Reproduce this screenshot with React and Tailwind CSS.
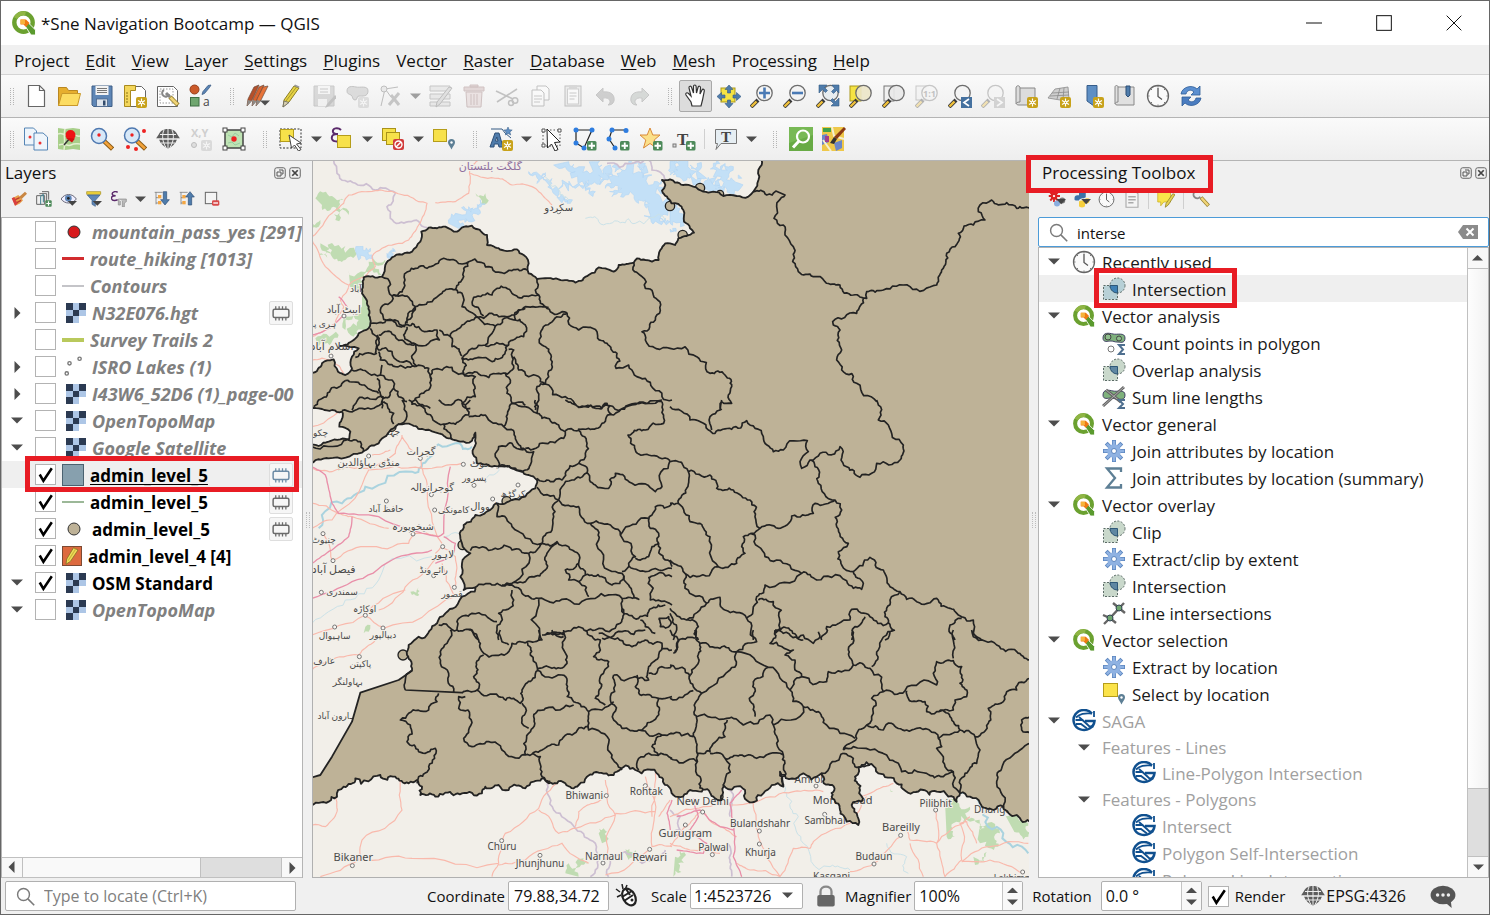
import React from "react";

/* ---------- small shared pieces ---------- */

const Svg = ({ children, s = 24, className = "", ...rest }) => (
  <svg viewBox="0 0 24 24" width={s} height={s} fill="none" className={"shrink-0 " + className} aria-hidden="true" {...rest}>
    {children}
  </svg>
);

const Down = ({ w = 12 }) => (
  <svg viewBox="0 0 12 7" width={w} height={w * 7 / 12} aria-hidden="true">
    <path d="M0 .5h12L6 6.5z" fill="#4d4d4d" />
  </svg>
);

const Right = () => (
  <svg viewBox="0 0 7 12" width="7" height="12" aria-hidden="true">
    <path d="M.5 0v12L6.5 6z" fill="#4d4d4d" />
  </svg>
);

const Star = ({ x = 13, y = 13, off }) => (
  <g transform={`translate(${x} ${y})`} opacity={off ? 0.45 : 1}>
    <rect width="11" height="11" rx="2" fill={off ? "#8b8b8b" : "#c8a21a"} />
    <path d="M5.500 1.500v8M2 3.500l7 4M9 3.500l-7 4" stroke="#fff" strokeWidth="1.200" />
    <circle cx="5.500" cy="5.500" r="1.600" fill="#fff" />
    <circle cx="5.500" cy="5.500" r=".7" fill={off ? "#8b8b8b" : "#c8a21a"} />
  </g>
);

const Plus = ({ x = 14, y = 14 }) => (
  <g transform={`translate(${x} ${y})`}>
    <rect width="9.500" height="9.500" rx="1.500" fill="#4d8a5a" />
    <path d="M4.750 1.500v6.500M1.500 4.750h6.500" stroke="#fff" strokeWidth="1.800" />
  </g>
);

const Lens = ({ fill = "#f4f4f4", children }) => (
  <>
    <path d="M1 23l7-7" stroke="#3a3a3a" strokeWidth="4" />
    <path d="M1.500 22.500l5-5" stroke="#f0c13a" strokeWidth="2.400" />
    <circle cx="14.500" cy="9" r="7.700" fill={fill} fillOpacity=".9" stroke="#6d6d6d" strokeWidth="1.300" />
    {children}
  </>
);

const QLogo = ({ s = 24 }) => (
  <Svg s={s}>
    <circle cx="11.500" cy="11.500" r="9.200" stroke="#6ba130" strokeWidth="4.400" />
    <path d="M3.500 7a9.200 9.200 0 0 1 10-4.500" stroke="#8fb544" strokeWidth="4" />
    <path d="M12.500 14l3-3 8 8v5h-4.500z" fill="#5a9a2e" stroke="#fff" strokeWidth=".9" />
    <path d="M8.500 8.500h5.500l3.500 3.500-3.500 4-2.500-2.500h-3z" fill="#ee7913" />
    <path d="M8.500 8.500h4.500v4.500h-4.500z" fill="#f6b33c" />
  </Svg>
);

const Chip = ({ color = "#6b6b6b" }) => (
  <Svg s={18}>
    <rect x="1.500" y="7" width="21" height="11" rx="2" stroke={color} strokeWidth="2" />
    <path d="M5 7V3M9.500 7V3M14 7V3M18.500 7V3M5 22v-4M9.500 22v-4M14 22v-4M18.500 22v-4" stroke={color} strokeWidth="1.700" />
  </Svg>
);

const Globe = ({ s = 24, c = "#5d5d5d" }) => (
  <Svg s={s}>
    <path d="M12 2c5 0 8 2.500 9 5L24 11.500H0L3 7c1-2.500 4-5 9-5z" fill={c} />
    <path d="M3 12.500h18c-1.500 4-5 7.500-9 9-4-1.500-7.500-5-9-9z" fill={c} />
    <path d="M12 2v19M8 3C5.500 8 6.500 15 10 20.500M16 3c2.500 5 1.500 12-2 17.500M4 7.500h16M0 12h24M5 16h14" stroke="#eee" strokeWidth="1" />
  </Svg>
);

const Clock = ({ s = 24 }) => (
  <Svg s={s}>
    <circle cx="12" cy="12" r="10.500" fill="#fafafa" stroke="#666" strokeWidth="1.300" />
    <path d="M12 4v8.500l4 3" stroke="#555" strokeWidth="1.300" />
    <path d="M12 2v1.500M12 20.500V22M2 12h1.500M20.500 12H22M5 5l1 1M19 5l-1 1M5 19l1-1M19 19l-1-1" stroke="#777" />
  </Svg>
);

const Pin = ({ x = 16, y = 13 }) => (
  <g transform={`translate(${x} ${y})`}>
    <path d="M3.500 10.500C2 7 0 5.500 0 3.500a3.500 3.500 0 0 1 7 0c0 2-2 3.500-3.500 7z" fill="#5d7f95" />
    <circle cx="3.500" cy="3.500" r="1.200" fill="#fff" />
  </g>
);

const Gear = ({ s = 24, c = "#8fb2e2", d = "#5c86bf" }) => (
  <Svg s={s}>
    <path d="M12 1v22M1 12h22M4.200 4.200l15.600 15.600M19.800 4.200L4.200 19.800" stroke={d} strokeWidth="4" />
    <path d="M12 1.800v20.400M1.800 12h20.400M4.800 4.800l14.400 14.400M19.200 4.800L4.800 19.200" stroke={c} strokeWidth="2.600" />
    <circle cx="12" cy="12" r="6.800" fill={c} />
    <circle cx="12" cy="12" r="2.500" fill="#fff" stroke={d} />
  </Svg>
);

const Overlap = ({ hot }) => (
  <Svg>
    <rect x="1.500" y="8.500" width="14" height="14" fill={hot ? "#b7d0d6" : "#c9d8cb"} stroke="#5b6b66" strokeDasharray="2 1.500" />
    <circle cx="15.500" cy="8.500" r="7.500" fill={hot ? "#b7d0d6" : "#c9d8cb"} stroke="#5b6b66" strokeDasharray="2 1.500" />
    <path d="M8 8.500h7.500V16A7.500 7.500 0 0 1 8 8.500z" fill={hot ? "#3f81b5" : "#5f87a2"} stroke="#2f5878" />
  </Svg>
);

const Saga = () => (
  <Svg>
    <path d="M20 4.500A10.500 10 0 1 0 22.500 12h-9.500" stroke="#10508f" strokeWidth="2.500" />
    <path d="M4 8.500c5-5 10-4 16-4M22 2v6M3.500 11h7l7 6.500h4M7 8l9 8M4 15h5l6 4.500" stroke="#10508f" strokeWidth="1.800" />
  </Svg>
);

const Broom = () => (
  <Svg s={16}>
    <path d="M2 11l9-5 7 8c-3 4-7 7-12 8z" fill="#e8a04c" />
    <path d="M4 14l9-4M6 19l9-5" stroke="#c03b2b" strokeWidth="2" />
    <path d="M12 9l9-8 3 3-8 8z" fill="#c98743" />
    <path d="M1 11l4-2 5 10-4 3z" fill="#d94040" />
  </Svg>
);

/* ---------- toolbar drawings ---------- */

const I = {
  newFile: <Svg><path d="M4.500 1.500h11l5 5v16h-16z" fill="#fff" stroke="#666" strokeWidth="1.200" /><path d="M15.500 1.500v5h5" stroke="#666" strokeWidth="1.200" /></Svg>,
  open: <Svg><path d="M1.500 3.500h8l2 3h9v15h-19z" fill="#e6ae2e" stroke="#b98722" /><path d="M5 9.500h18.500l-3 12h-19z" fill="#fcdc62" stroke="#c9982a" /></Svg>,
  save: <Svg><path d="M2 2h20v20.500H3.500L2 21z" fill="#5e86b6" stroke="#3f5f86" /><rect x="5.500" y="2" width="13" height="9" fill="#f3f3f3" /><path d="M7 4.500h10M7 6.500h10M7 8.500h10" stroke="#777" /><rect x="6.500" y="15" width="11" height="7.500" fill="#dfe6ee" stroke="#48648a" strokeWidth=".8" /><rect x="13" y="16.500" width="2.500" height="5" fill="#334c6d" /></Svg>,
  layout: <Svg><path d="M6.500 2.500h12l4 4v16h-16z" fill="#fff" stroke="#666" /><path d="M1.500 1.500h11v5h-5v16h-6z" fill="#f3d65b" stroke="#a98a1e" /><path d="M3 9h2M3 12h2M3 15h2M3 18h2" stroke="#8d7415" /><Star /></Svg>,
  layoutMgr: <Svg><path d="M1.500 2.500h16l4 4v16h-20z" fill="#fff" stroke="#666" /><rect x="4" y="5" width="13" height="14" stroke="#999" strokeDasharray="1.500 1.500" /><path d="M10 9l4 4" stroke="#888" strokeWidth="3" /><path d="M8 6a3.500 3.500 0 1 0 5 4" stroke="#888" strokeWidth="2" /><path d="M14 13l8 8" stroke="#8f7b2a" strokeWidth="4.500" /><path d="M14.500 13.500l7 7" stroke="#f0d477" strokeWidth="2.800" /></Svg>,
  style: <Svg><circle cx="5.500" cy="5.500" r="4.500" fill="#cc5a2a" stroke="#96401c" /><path d="M22 1l-3 .5-5 6-1 3 2.500-1 5-6z" fill="#5a84b5" stroke="#3f5f86" strokeWidth=".8" /><rect x="1.500" y="13.500" width="8.500" height="8.500" fill="#6fa66f" stroke="#3f6f44" /><text x="14" y="22" fontSize="12" fill="#444" fontFamily="Open Sans, sans-serif">a</text></Svg>,
  editsMulti: <Svg><path d="M8 3l5-2-7 15-5 6 1-7z" fill="#b5502a" stroke="#6b4a3a" strokeWidth=".7" /><path d="M13 3l5-2-7 15-5 6 1-7z" fill="#d8622e" stroke="#6b4a3a" strokeWidth=".7" /><path d="M17 3l5-1-7 14-5 6 1-7z" fill="#e8743a" stroke="#6b4a3a" strokeWidth=".7" /><path d="M1 22l1-6 4 1zM6 22l1-6 4 1zM10 22l1-6 4 1z" fill="#8d8a86" /><path d="M14 16.500h10l-5 5z" fill="#4d4d4d" /></Svg>,
  pencil: <Svg><path d="M15 2l5 2-10 14-6 5 1-7z" fill="#e6d245" stroke="#8b7d24" /><path d="M17.500 3L7 17" stroke="#a99a2a" /><path d="M4 23l1-6 5 1.500z" fill="#d9d1b0" stroke="#666" strokeWidth=".8" /><path d="M15 2l1-1.500 4.500 2L20 4z" fill="#999" /></Svg>,
  saveOff: <Svg opacity=".3"><path d="M2 2h20v20H2z" fill="#9a9a9a" stroke="#666" /><rect x="6" y="2" width="12" height="8" fill="#f3f3f3" /><path d="M8 5h8M8 8h8" stroke="#666" /><rect x="6" y="15" width="9" height="7" fill="#eee" /><path d="M23 11l-8 9-2 4 4-2 8-9z" fill="#555" /></Svg>,
  polyOff: <Svg opacity=".45"><path d="M2 7c0-5 5-5 9-4s12-2 12 4-6 5-9 5-1 4-4 4-2-4-4-5-4-1-4-4z" fill="#bdbdbd" stroke="#888" /><Star x={13} y={13} off /></Svg>,
  vertexOff: <Svg opacity=".5"><path d="M3 22L7 5 20 3M8 6l5 7" stroke="#888" /><circle cx="6" cy="5" r="3" fill="#ddd" stroke="#888" /><path d="M11 21l10-12M13 11l8 10" stroke="#999" strokeWidth="3" /></Svg>,
  attrOff: <Svg opacity=".5"><path d="M1 2h20v5H1zM1 10h20v5H1zM1 18h20v4H1z" fill="#ddd" stroke="#999" /><path d="M20 3l3 1-12 16-4 3 1-5z" fill="#ccc" stroke="#888" /></Svg>,
  trashOff: <Svg opacity=".4"><path d="M2 3h20v4H2zM8 1h8v2H8z" fill="#c5abab" stroke="#977" /><path d="M4 8h16l-1 15H5z" fill="#ddc8c8" stroke="#977" /><path d="M9 10v11M12 10v11M15 10v11" stroke="#977" /></Svg>,
  cutOff: <Svg opacity=".4"><path d="M1 7l17 8M2 18L22 5" stroke="#777" strokeWidth="1.600" /><circle cx="20" cy="16.500" r="2.800" stroke="#777" strokeWidth="1.500" /><circle cx="16" cy="19" r="2.500" stroke="#777" strokeWidth="1.500" /></Svg>,
  copyOff: <Svg opacity=".4"><path d="M9 2h9l3 3v11H9z" fill="#fff" stroke="#777" /><path d="M4 6h9l3 3v13H4z" fill="#fff" stroke="#777" /><path d="M6 12h8M6 15h8M6 18h6" stroke="#888" /></Svg>,
  pasteOff: <Svg opacity=".4"><rect x="4" y="2" width="16" height="20" fill="#ddd" stroke="#777" /><rect x="6.500" y="5" width="11" height="15" fill="#fff" stroke="#999" /><path d="M8 1h8v4H8z" fill="#aaa" /><path d="M8.500 9h7M8.500 12h7M8.500 15h5" stroke="#888" /></Svg>,
  undoOff: <Svg opacity=".35"><path d="M9 4v4c8-1 12 3 11 9-1 3-3 4-6 4 4-3 2-8-5-7v4L2 11z" fill="#8a8a8a" stroke="#777" /></Svg>,
  redoOff: <Svg opacity=".35"><path d="M15 4v4C7 7 3 11 4 17c1 3 3 4 6 4-4-3-2-8 5-7v4l7-7z" fill="#9fa8a2" stroke="#777" /></Svg>,
  pan: <Svg><path d="M8 22l-1-4-5-7c-1-2 1-3 2.500-1.500L7 12 5 4c-.3-2 2-2.500 2.600-.5L9.500 9V2.500c0-2 2.500-2 2.600 0L12.500 9l1.500-5.500c.5-2 2.700-1.500 2.500.5L16 10l2-4c.8-1.500 2.700-.6 2.300 1L18.500 16 17 22z" fill="#fff" stroke="#333" strokeWidth="1.200" /></Svg>,
  panSel: <Svg><rect x="4" y="4" width="14" height="14" fill="#f5e343" stroke="#a9971c" /><path d="M12 1l4 4.500h-2.500V9h-3V5.500H8zM12 24l4-4.500h-2.500V16h-3v3.500H8zM0 12.500l4.500-4V11H8v3H4.500v2.500zM24 12.500l-4.500-4V11H16v3h3.500v2.500z" fill="#4f7cab" stroke="#345a84" strokeWidth=".6" /></Svg>,
  zin: <Svg><Lens><path d="M14.500 3.500v11M9 9h11" stroke="#4a7ab5" strokeWidth="2.600" /></Lens></Svg>,
  zout: <Svg><Lens><path d="M9 9h11" stroke="#4a7ab5" strokeWidth="2.600" /></Lens></Svg>,
  zfull: <Svg><Lens fill="#e7ecef" /><path d="M3 1h8L8.500 3.500l3 3-2 2-3-3L3 9zM23 1v8l-2.500-2.500-3 3-2-2 3-3L16 1zM23 22h-8l2.500-2.500-3-3 2-2 3 3L23 14z" fill="#4f7cab" stroke="#345a84" strokeWidth=".6" /></Svg>,
  zsel: <Svg><rect x="1" y="2" width="11" height="15" fill="#f5e343" stroke="#a9971c" /><Lens fill="#ece6c8" /></Svg>,
  zlayer: <Svg><rect x="2" y="2" width="10" height="15" fill="#f0f0f0" stroke="#777" /><Lens fill="#e9e9e9" /></Svg>,
  znative: <Svg opacity=".35"><rect x="1" y="2" width="10" height="14" fill="#f0f0f0" stroke="#777" /><Lens /><text x="8" y="13" fontSize="9" fontWeight="700" fill="#666" fontFamily="Open Sans, sans-serif">1:1</text></Svg>,
  zlast: <Svg><Lens /><rect x="13" y="13" width="11" height="11" fill="#45719f" /><path d="M21 15l-5 3.500 5 3.500" stroke="#fff" strokeWidth="1.700" /></Svg>,
  znext: <Svg opacity=".35"><Lens /><rect x="13" y="13" width="11" height="11" fill="#999" /><path d="M16 15l5 3.500-5 3.500" stroke="#fff" strokeWidth="1.700" /></Svg>,
  newMap: <Svg><path d="M2 4c0-3 4-3 4 0h15v17H5c-3 0-3-2-3-3z" fill="#dcdcdc" stroke="#888" /><path d="M6 4v14c-3 0-4 1-4 2" stroke="#888" /><Star x={13} y={13} /></Svg>,
  new3d: <Svg><path d="M8 5l13-2 1 12-9 1-12-2z" fill="#cfcfcf" stroke="#8a8a8a" strokeWidth=".8" /><path d="M5 9l17-1M3 12l19-1M13 4l-3 11M17 4l-1 11" stroke="#8a8a8a" strokeWidth=".8" /><Star x={13} y={13} /></Svg>,
  bookmark: <Svg><path d="M7 1.500h10V17l-3 5-7-5z" fill="#5e8fc4" stroke="#365d8a" /><Star x={13} y={13} /></Svg>,
  bookmarks: <Svg><path d="M2 3c0-2 3-2 3 0h16v18H4c-2 0-2-2-2-3z" fill="#e0e0e0" stroke="#888" /><path d="M5 3v15c-2 0-3 1-3 2" stroke="#888" /><path d="M13 2h4v9l-2 2-2-2z" fill="#4f7cab" stroke="#2d4f77" /></Svg>,
  clock: <Clock />,
  refresh: <Svg><path d="M2 10C3 3 13 0 18 5l3-3v9h-9l3-3C12 5 8 6 7 10z" fill="#5b8fd0" stroke="#2f5d97" strokeWidth=".8" /><path d="M22 14c-1 7-11 10-16 5l-3 3v-9h9l-3 3c3 3 7 2 8-2z" fill="#4a7cc0" stroke="#2f5d97" strokeWidth=".8" /></Svg>,
  idLayers: <Svg><path d="M.5 1h9l3 3v14H.5z" fill="#eef5fb" stroke="#5585b5" /><path d="M10 6h9l4.500 4v13H10z" fill="#eef5fb" stroke="#5585b5" /><circle cx="6" cy="10" r="1.500" fill="#e33" /><circle cx="16" cy="16" r="1.500" fill="#e33" /></Svg>,
  mapPin: <Svg><path d="M1 1l7 1 8-1 7 1v21l-7-1-8 1-7-1z" fill="#a8cf8a" /><path d="M1 7c5-2 7 3 12 1s6 2 10 1M2 18c5-3 8 2 12 0s6-1 9-1M8 2c-2 7 1 13-1 21" stroke="#e3efcf" strokeWidth="1.500" /><path d="M7 18l6-7" stroke="#333" strokeWidth="1.500" /><circle cx="13.500" cy="8" r="5" fill="#ee1414" /><path d="M9 11l6 4.500 3-4z" fill="#d01010" /></Svg>,
  magDot: <Svg><path d="M14 14l8.500 8" stroke="#8a5a14" strokeWidth="4.500" /><path d="M14.500 14.500l7.500 7" stroke="#f2a23a" strokeWidth="2.600" /><circle cx="9" cy="9" r="7.500" fill="#d7e8f8" stroke="#4e78b0" strokeWidth="1.500" /><circle cx="9" cy="8" r="1.700" fill="#e22" /></Svg>,
  magDots: <Svg><path d="M14 14l8.500 8" stroke="#8a5a14" strokeWidth="4.500" /><path d="M14.500 14.500l7.500 7" stroke="#f2a23a" strokeWidth="2.600" /><circle cx="9" cy="8.500" r="7.500" fill="#d7e8f8" stroke="#4e78b0" strokeWidth="1.500" /><g fill="#e22"><circle cx="9" cy="8" r="1.700" /><circle cx="21" cy="4" r="2" /><circle cx="5" cy="20" r="2" /><circle cx="13" cy="22" r="2" /></g></Svg>,
  globe: <Globe />,
  xy: <Svg opacity=".5"><text x="2" y="10" fontSize="11" fontWeight="700" fill="#aaa" fontFamily="Open Sans, sans-serif">X,Y</text><circle cx="5" cy="18" r="2.500" fill="#ccc" stroke="#888" /><Star x={12} y={13} off /></Svg>,
  extent: <Svg><rect x="3" y="3" width="18" height="18" fill="#bfe3b4" stroke="#444" strokeWidth="1.500" /><path d="M6 8l4 2 3-4 4 3M6 16l4-1 3 3 5-2" stroke="#9accA0" /><g fill="#fff" stroke="#444"><rect x="1" y="1" width="4" height="4" /><rect x="19" y="1" width="4" height="4" /><rect x="1" y="19" width="4" height="4" /><rect x="19" y="19" width="4" height="4" /></g><circle cx="12" cy="12" r="2.700" fill="#e22" /></Svg>,
  select: <Svg><rect x="1" y="2" width="21" height="19" stroke="#333" strokeDasharray="2 1.500" /><rect x="1.500" y="2.500" width="13" height="12" fill="#f7e14a" stroke="#b59d1a" /><path d="M10 8l12 8-4.500 1 4.500 5.500-2.500 1.500-4-6-3 3z" fill="#fff" stroke="#444" /></Svg>,
  selExpr: <Svg><path d="M11 3C8 0 2 1 3 5c.5 2 3 2 5 2-4 0-7 1-6 5 1 3 6 3 9 1" stroke="#5b2a6b" strokeWidth="2" /><rect x="7.500" y="8.500" width="13" height="12" fill="#f7e14a" stroke="#b59d1a" /></Svg>,
  deselect: <Svg><rect x="1.500" y="1.500" width="13" height="12" fill="#f7e14a" stroke="#a9921a" /><rect x="5.500" y="5.500" width="13" height="12" fill="#f7e14a" stroke="#a9921a" /><rect x="12" y="12" width="11" height="11" rx="2" fill="#d13b3b" /><circle cx="17.500" cy="17.500" r="3.500" stroke="#fff" strokeWidth="1.400" /><path d="M15 20l5-5" stroke="#fff" strokeWidth="1.400" /></Svg>,
  selLoc: <Svg><rect x="1.500" y="2.500" width="13" height="12" fill="#f7e14a" stroke="#b59d1a" /><Pin x={16} y={12} /></Svg>,
  label: <Svg><path d="M2 2h11l3 4 6 5" stroke="#345a84" /><path d="M5 20H1L6 6h4l4 14h-4l-.8-3h-4zM6.500 14h2.500L7.800 10z" fill="#4f7cab" stroke="#2d4f77" fillRule="evenodd" /><path d="M19 0l1.200 2.800 3 .2-2.300 2 .8 3-2.700-1.600L16.300 8l.8-3-2.300-2 3-.2z" fill="#5e8fc4" stroke="#345a84" strokeWidth=".5" /><Star x={13} y={13} /></Svg>,
  arrowSel: <Svg><rect x="3" y="3" width="17" height="16" stroke="#555" strokeDasharray="1.500 2" /><path d="M2 2h3v3H2zM18 2h3v3h-3zM2 17h3v3H2z" fill="#fff" stroke="#555" /><path d="M7 2l13 13-5.500.5 3.500 7-3 1.500-3.500-7-4 4z" fill="#fff" stroke="#222" /></Svg>,
  polyAdd: <Svg><path d="M3 3h16l-8 18-8-5z" stroke="#222" strokeWidth="1.200" /><g fill="#2e7de0"><circle cx="3" cy="3" r="2.500" /><circle cx="19" cy="3" r="2.500" /><circle cx="3" cy="16" r="2.500" /><circle cx="11" cy="21" r="2.500" /></g><Plus /></Svg>,
  lineAdd: <Svg><path d="M20 3H6L3 12l6 9" stroke="#222" strokeWidth="1.200" /><g fill="#2e7de0"><circle cx="20" cy="3.500" r="2.500" /><circle cx="6" cy="3" r="2.500" /><circle cx="3" cy="12" r="2.500" /><circle cx="9" cy="21" r="2.500" /></g><Plus /></Svg>,
  starAdd: <Svg><path d="M11 1l2.800 7H21l-5.800 5 2.300 8L11 16.500 4.500 21l2.300-8L1 8h7.200z" fill="#fbe08a" stroke="#d98a3a" /><Plus /></Svg>,
  textAdd: <Svg><text x="5" y="18" fontSize="17" fontWeight="700" fill="#444" fontFamily="Liberation Serif, serif">T</text><rect x="1" y="17" width="3" height="3" fill="#ddd" stroke="#777" /><Plus /></Svg>,
  textNote: <Svg><path d="M1.500 2.500h21v14H7l-5 6 1.500-6h-2z" fill="#e6eef3" stroke="#777" /><text x="7" y="14.500" fontSize="15" fontWeight="700" fill="#444" fontFamily="Liberation Serif, serif">T</text></Svg>,
  greenMag: <Svg><rect width="24" height="24" fill="#78b955" /><path d="M0 16l24-8v16H0z" fill="#68ab45" /><circle cx="14" cy="9.500" r="6" stroke="#fff" strokeWidth="2.200" /><path d="M10 14l-6 6.500" stroke="#fff" strokeWidth="3" /></Svg>,
  mapEdit: <Svg><rect width="22" height="24" fill="#efc84a" /><path d="M1 1h8v4H1z" fill="#3fa14a" /><path d="M0 8l5-1 2 8-7 3zM12 16l8-3v8l-6 3z" fill="#6b86c8" /><path d="M1 13l8 11M10 0l2 9 10 3" stroke="#f5f0d0" strokeWidth="2" /><path d="M3 9h4v6H3z" fill="#a33f8a" /><path d="M22 0l2 2-9 10-3-2z" fill="#8b3a14" /><path d="M12 10l3 2-3 5-4-1z" fill="#333" /></Svg>,
};

const mini = {
  addGroup: <Svg s={16}><path d="M1 7h12v13H1zM5 4h11v13M9 1h10v12" stroke="#666" strokeWidth="1.500" fill="none" /><path d="M7 20V8l4-3v12" stroke="#3f7f8f" strokeWidth="1.500" /><Plus x={14} y={14} /></Svg>,
  eye: <Svg s={16}><path d="M0 12C6 3 17 3 23 12 17 20 6 20 0 12z" fill="#eef" stroke="#667" strokeWidth="1.500" /><circle cx="11" cy="11" r="5" fill="#5e86b6" /><circle cx="11" cy="11" r="2" fill="#222" /><path d="M10 15h14l-7 7z" fill="#444" /></Svg>,
  filter: <Svg s={16}><path d="M1 1h21v4H1z" fill="#f1d63c" stroke="#a18d1b" /><path d="M2 6h19l-7 8v9l-5-3v-6z" fill="#5e86b6" stroke="#365d8a" /><path d="M10 15h14l-7 7z" fill="#444" /></Svg>,
  expr: <Svg s={16}><path d="M10 2C7 0 1 1 2 5c.5 2 3 2 5 2-4 0-7 1-6 5 1 3 6 3 9 1" stroke="#5b2a6b" strokeWidth="2.200" /><path d="M11 12h12v4l-3 2v6h-3v-9M11 12v9h3v-6" fill="#bbb" stroke="#888" /></Svg>,
  expand: <Svg s={16}><path d="M1 2h12M3 2v18M3 10h4M3 18h4" stroke="#666" /><rect x="6" y="6" width="5" height="5" fill="#f5a742" /><rect x="6" y="15" width="5" height="5" fill="#f5a742" /><path d="M14 1h5v12h4l-6.500 8L10 13h4z" fill="#4f7cab" stroke="#2d4f77" /></Svg>,
  collapse: <Svg s={16}><path d="M1 2h12M3 2v18M3 10h4M3 18h4" stroke="#666" /><rect x="5" y="6" width="5" height="5" fill="#f5a742" /><rect x="5" y="15" width="5" height="5" fill="#f5a742" /><path d="M14 21h5V9h4l-6.500-8L10 9h4z" fill="#4f7cab" stroke="#2d4f77" /></Svg>,
  remove: <Svg s={16}><rect x="2" y="2" width="17" height="17" fill="#f4f4f4" stroke="#666" strokeWidth="1.500" /><rect x="12" y="14" width="11" height="8" rx="2" fill="#d84a4a" /><path d="M14 18h7" stroke="#fff" strokeWidth="2" /></Svg>,
};

const toolbar1 = [
  [["New project", "newFile"], ["Open project", "open"], ["Save project", "save"], ["New print layout", "layout"], ["Layout manager", "layoutMgr"], ["Style manager", "style"]],
  [["Current edits", "editsMulti"], ["Toggle editing", "pencil"], ["Save edits", "saveOff"], ["Add polygon", "polyOff"], ["Vertex tool", "vertexOff", "offmenu"], ["Modify attributes", "attrOff"], ["Delete selected", "trashOff"], ["Cut", "cutOff"], ["Copy", "copyOff"], ["Paste", "pasteOff"], ["Undo", "undoOff"], ["Redo", "redoOff"]],
  [["Pan map", "pan", "on"], ["Pan to selection", "panSel"], ["Zoom in", "zin"], ["Zoom out", "zout"], ["Zoom full", "zfull"], ["Zoom to selection", "zsel"], ["Zoom to layer", "zlayer"], ["Zoom native", "znative"], ["Zoom last", "zlast"], ["Zoom next", "znext"], ["New map view", "newMap"], ["New 3D map view", "new3d"], ["New bookmark", "bookmark"], ["Show bookmarks", "bookmarks"], ["Temporal controller", "clock"], ["Refresh", "refresh"]],
];

const toolbar2 = [
  [["Copy coordinates", "idLayers"], ["Place pin", "mapPin"], ["Zoom to point", "magDot"], ["Zoom to points", "magDots"], ["Projection", "globe"], ["Coordinate capture", "xy"], ["Show extent", "extent"]],
  [["Select features", "select", "menu"], ["Select by expression", "selExpr", "menu"], ["Deselect", "deselect", "menu"], ["Select by location", "selLoc"]],
  [["Label options", "label", "menu"], ["Select annotation", "arrowSel"], ["Polygon annotation", "polyAdd"], ["Line annotation", "lineAdd"], ["Marker annotation", "starAdd"], ["Text annotation", "textAdd"], ["|"], ["Text balloon", "textNote", "menu"]],
  [["Search places", "greenMag"], ["Edit map", "mapEdit"]],
];

const Grip = ({ first }) => (
  <div className={(first ? "w-[18px] pl-[9px]" : "w-6 pl-[13px]") + " flex shrink-0 items-center"}>
    <span className="h-[17px] w-1 border-x border-dotted border-[#b5b5b5]" />
  </div>
);

function Toolbar({ groups, label }) {
  return (
    <div role="toolbar" aria-label={label} className="flex h-[43px] shrink-0 items-center overflow-hidden border-b border-[#b4b4b4] bg-linear-to-b from-[#fafafa] to-[#eeeeee]">
      {groups.map((g, i) => (
        <div key={i} className="flex h-full items-center">
          <Grip first={i === 0} />
          {g.map(([name, icon, kind]) =>
            name === "|" ? (
              <span key={name} className="mx-1 h-5 w-px bg-[#d0d0d0]" />
            ) : (
              <React.Fragment key={name}>
                <button aria-label={name} className={"grid h-8 w-[33px] place-items-center rounded-xs border " + (kind === "on" ? "border-[#a9a9a9] bg-[#dcdcdc]" : "border-transparent")}>
                  {I[icon]}
                </button>
                {(kind === "menu" || kind === "offmenu") && (
                  <button aria-label={name + " menu"} className={"grid h-8 w-[18px] place-items-center " + (kind === "offmenu" ? "opacity-50" : "")}>
                    <Down w={11} />
                  </button>
                )}
              </React.Fragment>
            )
          )}
        </div>
      ))}
    </div>
  );
}

const menus = [["Project", 3], ["Edit", 0], ["View", 0], ["Layer", 0], ["Settings", 0], ["Plugins", 0], ["Vector", 4], ["Raster", 0], ["Database", 0], ["Web", 0], ["Mesh", 0], ["Processing", 3], ["Help", 0]];

function Check({ label, checked }) {
  return (
    <span className="grid size-[21px] shrink-0">
      <input type="checkbox" aria-label={label} defaultChecked={checked} className="peer col-start-1 row-start-1 size-[21px] appearance-none border border-[#b3b3b3] bg-white" />
      <svg viewBox="0 0 20 20" className="pointer-events-none invisible col-start-1 row-start-1 size-[21px] peer-checked:visible" aria-hidden="true">
        <path d="M4.500 10l3.500 6L16 4" fill="none" stroke="#000" strokeWidth="2.400" />
      </svg>
    </span>
  );
}

/* ---------- layers panel ---------- */

const Raster = () => (
  <svg viewBox="0 0 20 20" width="20" height="20" aria-hidden="true">
    <rect width="20" height="20" fill="#fff" />
    <path d="M0 0h7v7H0zM13 0h7v7h-7zM7 7h6v7H7zM0 13h7v7H0z" fill="#2b3a52" />
    <path d="M7 0h6v7H7zM0 7h7v6H0zM13 7h7v6h-7zM7 13h6v7H7z" fill="#adc6e6" />
  </svg>
);

const sym = {
  dot: <svg viewBox="0 0 14 14" width="14" height="14"><circle cx="7" cy="7" r="6" fill="#d7191c" stroke="#333" /></svg>,
  tan: <svg viewBox="0 0 14 14" width="14" height="14"><circle cx="7" cy="7" r="6" fill="#beb297" stroke="#333" /></svg>,
  red: <span className="h-[3px] w-[22px] bg-[#d22c2f]" />,
  grey: <span className="h-0.5 w-[22px] bg-[#c4c4c8]" />,
  lime: <span className="h-[4px] w-[22px] bg-[#b9c95c]" />,
  green: <span className="h-0.5 w-[22px] bg-[#9cb898]" />,
  blue: <span className="size-[22px] border border-[#4b6270] bg-[#87a0ae]" />,
  raster: <Raster />,
  points: <Svg s={22}><g stroke="#777" strokeWidth="1.500"><circle cx="17" cy="3" r="1.800" /><circle cx="6" cy="8" r="1.800" /><circle cx="3" cy="19" r="1.800" /></g></Svg>,
  edit: <span className="grid size-5 place-items-center border border-[#7d4a33] bg-[#dd6a3f]"><Svg s={18}><path d="M14 1l6 3-10 15-6 4 1-7z" fill="#f0dc5a" stroke="#7c6c22" /><path d="M17 2.500L7 18" stroke="#c9b53c" strokeWidth="1.500" /></Svg></span>,
};

const layers = [
  { n: "mountain_pass_yes [291]", s: "dot", w: 24 },
  { n: "route_hiking [1013]", s: "red", w: 22 },
  { n: "Contours", s: "grey", w: 22 },
  { n: "N32E076.hgt", s: "raster", w: 24, a: "r", chip: "#6b6b6b" },
  { n: "Survey Trails 2", s: "lime", w: 22 },
  { n: "ISRO Lakes (1)", s: "points", w: 24, a: "r" },
  { n: "I43W6_52D6 (1)_page-00", s: "raster", w: 24, a: "r" },
  { n: "OpenTopoMap", s: "raster", w: 24, a: "d" },
  { n: "Google Satellite", s: "raster", w: 24, a: "d" },
  { n: "admin_level_5", s: "blue", w: 22, on: true, sel: true, chip: "#6d8ba5" },
  { n: "admin_level_5", s: "green", w: 22, on: true, chip: "#6b6b6b" },
  { n: "admin_level_5", s: "tan", w: 24, on: true, chip: "#6b6b6b" },
  { n: "admin_level_4 [4]", s: "edit", w: 20, on: true },
  { n: "OSM Standard", s: "raster", w: 24, on: true, a: "d" },
  { n: "OpenTopoMap", s: "raster", w: 24, a: "d" },
];

const symWidth = { 20: "w-5 justify-start", 22: "w-[22px] justify-center", 24: "w-6 justify-end" };

function LayerRow({ l }) {
  return (
    <li className={"relative flex h-[27px] items-center " + (l.sel ? "bg-[#efefef]" : "")}>
      <span className="flex w-[33px] shrink-0 justify-start pl-[9px]">
        {l.a === "r" && <button aria-label={"Expand " + l.n} className="pl-[3px]"><Right /></button>}
        {l.a === "d" && <button aria-label={"Collapse " + l.n}><Down /></button>}
      </span>
      <Check label={l.n} checked={l.on} />
      <span className={"ml-1.5 flex shrink-0 items-center " + (l.s === "dot" || l.s === "tan" ? "w-6 justify-center" : symWidth[l.w])}>{sym[l.s]}</span>
      <span className={"ml-1.5 min-w-0 flex-1 overflow-hidden pt-0.5 leading-[25px] font-bold whitespace-nowrap " + (l.on ? "text-[17px] text-black " : "text-[18px] text-[#808080] italic ") + (l.sel ? "underline underline-offset-2" : "")}>{l.n}</span>
      {l.chip && (
        <button aria-label={"Temporary layer " + l.n} className="mr-[9px] grid size-6 shrink-0 place-items-center rounded-xs border border-[#dedede] bg-[#f6f6f6]">
          <Chip color={l.chip} />
        </button>
      )}
      {l.sel && <span className="pointer-events-none absolute -top-[5px] right-[3px] left-[23px] z-10 h-9 border-5 border-[#e81c24]" />}
    </li>
  );
}

const DockButtons = ({ name }) => (
  <span className="flex gap-[3px]">
    <button aria-label={"Float " + name}>
      <Svg s={12}><rect x="1.500" y="1.500" width="21" height="21" rx="4" stroke="#666" strokeWidth="2" /><path d="M10 6h8v8h-3M6 10h8v8H6z" stroke="#555" strokeWidth="2" /></Svg>
    </button>
    <button aria-label={"Close " + name}>
      <Svg s={12}><rect x="1.500" y="1.500" width="21" height="21" rx="4" stroke="#666" strokeWidth="2" /><path d="M6.500 6.500l11 11M17.500 6.500l-11 11" stroke="#444" strokeWidth="3.500" /></Svg>
    </button>
  </span>
);

function LayersPanel() {
  return (
    <aside className="flex w-[302px] shrink-0 flex-col">
      <div className="flex h-6 shrink-0 items-center justify-between pr-[2px] pl-1">
        <h2 className="text-[17px]">Layers</h2>
        <DockButtons name="layers" />
      </div>
      <div className="mb-1 flex h-7 shrink-0 items-center pl-[5px]">
        {[["Styling", <Broom />], ["Add group", mini.addGroup], ["Visibility", mini.eye], ["Filter legend", mini.filter], ["Filter by expression", mini.expr]].map(([n, ic]) => (
          <button key={n} aria-label={n} className="grid w-[25px] place-items-center">{ic}</button>
        ))}
        <button aria-label="Expression options" className="grid w-[18px] place-items-center"><Down w={11} /></button>
        {[["Expand all", mini.expand], ["Collapse all", mini.collapse], ["Remove layer", mini.remove]].map(([n, ic]) => (
          <button key={n} aria-label={n} className="grid w-[25px] place-items-center">{ic}</button>
        ))}
      </div>
      <div className="flex min-h-0 flex-1 flex-col border border-b-0 border-[#b4b4b4] bg-white">
        <ul className="flex-1 overflow-hidden">
          {layers.map((l, i) => <LayerRow key={i} l={l} />)}
        </ul>
        <div className="flex h-[21px] shrink-0 border-y border-[#c0c0c0] bg-[#dedede]">
          <button aria-label="Scroll left" className="grid w-5 rotate-180 place-items-center bg-[#f8f8f8]"><Right /></button>
          <div className="w-[179px] border-x border-[#c0c0c0] bg-[#f9f9f9]" />
          <div className="flex-1" />
          <button aria-label="Scroll right" className="grid w-[21px] place-items-center border-l border-[#c0c0c0] bg-[#f8f8f8]"><Right /></button>
        </div>
      </div>
    </aside>
  );
}

/* ---------- map ---------- */

const ORIGIN = { A: [0, 0], B: [0, 720], C: [0, 1410], D: [1074, 0], E: [1074, 720], F: [1074, 1410] };

const at = (tile, text) =>
  text.trim().split(/\s+/).map((p) => {
    const [x, y] = p.split(",").map(Number);
    return [x + ORIGIN[tile][0], y + ORIGIN[tile][1]];
  });

/* Deterministic midpoint displacement, so that borders look surveyed. */
function rough(points, amount = 0.15) {
  let pts = points;
  for (let pass = 0; pass < 3; pass++) {
    const out = [pts[0]];
    for (let i = 1; i < pts.length; i++) {
      const [x0, y0] = pts[i - 1];
      const [x1, y1] = pts[i];
      const dx = x1 - x0;
      const dy = y1 - y0;
      if (Math.hypot(dx, dy) > 11) {
        const h = Math.sin((x0 + x1) * 12.9898 + (y0 + y1) * 78.233) * 43758.5453;
        const r = (h - Math.floor(h) - 0.5) * 2 * amount;
        out.push([(x0 + x1) / 2 - dy * r, (y0 + y1) / 2 + dx * r]);
      }
      out.push(pts[i]);
    }
    pts = out;
  }
  return pts;
}

const toPath = (pts) => "M" + pts.map(([x, y]) => x.toFixed(1) + " " + y.toFixed(1)).join("L");

const coast = [
  at("D", "275,0 275,15 265,30 268,50 262,70 250,95 235,110 200,108 160,108 130,95 100,95 70,80 40,75 15,68 0,58"),
  at("A", "1050,60 1060,75 1050,92 1065,110 1078,130"),
  at("D", "25,132 40,150 42,185 60,205 72,218 50,228 25,235 15,255 0,250"),
  at("A", "1060,250 1045,270 1040,300 1020,305 1000,300 975,295 965,308 920,315 905,335 880,325 860,322 830,345 790,368 740,358 675,357 650,340 648,300 635,285 615,268 600,272 570,270 525,255 525,225 480,197 435,215 400,200 350,203 328,215 325,245 300,275 240,292 220,315 210,350 155,352 150,400 170,440 175,490 170,505 140,520 125,540 85,558 140,565 120,590 120,625 100,645 78,635 65,598 30,610 0,640"),
].flat();
const west1 = [at("A", "-10,745 20,745"), at("B", "30,27 60,30 90,35 82,80 115,95 110,120 85,118 50,125 20,138 -10,135")].flat();
const west2 = [
  at("B", "-10,192 50,175 150,158 200,130 245,85 260,72 300,75 340,90 380,100 420,118 445,125 480,122 490,98 482,160 495,190 540,200 600,205 650,225 675,240 670,265 640,290 600,300 555,310 540,325 490,345 455,375 443,400 450,430 475,460 450,490 445,530 455,570 490,562 488,575 450,590 400,640 375,670 330,715"),
  at("C", "320,20 290,45 285,75 298,95 300,122"),
].flat();
const desert = at("C", "300,122 260,150 145,188 120,275 60,380 25,435 -10,445");
const south = [
  at("C", "-10,515 50,515 75,500 95,470 130,445 205,435 250,440 290,460 315,450 330,470 325,495 370,500 400,488 450,490 510,490 520,470 560,465 590,480 640,475 665,455 710,460 760,460 800,465 825,440 845,428 905,435 915,425 970,420 1040,435 1070,470"),
  at("F", "10,495 60,480 95,485 130,500 155,510 160,465 225,480 232,512 280,490 340,470 330,425 390,435 455,430 480,465 485,500 510,540 530,575 565,585 560,550 545,525 575,515 570,480 555,440 575,405 605,402 625,430 680,460 700,478 760,480 800,485 835,500 860,515 870,490 900,500 930,520 970,540 1000,530 1040,555 1085,580"),
].flat();

const inner = {
  A: [
    "240,408 275,385 298,325 345,325 395,295 470,305 540,322 600,332 645,330", "470,305 455,350 430,388 390,400 360,425 310,440",
    "240,408 210,350", "240,408 290,412 310,440 300,470 280,495 215,478 205,450 240,408",
    "430,388 450,400 450,440 480,458 515,475 540,460 600,465 640,440 700,440 750,455 765,458",
    "640,408 680,405 670,390 675,357", "640,408 600,400 555,385 540,405 485,412 488,440 515,468", "680,405 685,430 710,443",
    "175,490 195,490 240,480 280,500", "280,495 320,500 375,510 382,540 350,550 310,552 275,525 285,500",
    "200,525 240,522 270,540 310,552 300,595 315,620", "195,525 200,570 240,575 300,615", "200,575 205,600 250,620 310,620",
    "310,620 350,625 358,660 350,690 310,715 300,735", "382,510 415,530 420,560 450,588", "495,470 450,495 415,530", "310,440 285,490",
    "495,470 550,498 520,555 480,565 450,595 455,640", "550,498 600,478 640,495 635,530 590,555 520,558", "450,595 500,592 540,605 580,575 590,555",
    "450,640 500,642 560,640 605,625 605,570 590,568", "610,478 615,455 640,445", "765,458 725,480 685,520 690,555 718,590 710,650 700,672",
    "605,590 620,630 650,650 700,672 760,710 820,740 850,745", "765,458 800,510 855,515 885,550 915,580 912,625 950,615 1000,655 1050,710 1080,720",
    "965,308 990,350 1000,385 1037,420 1030,480 990,515 1000,540 1074,565", "360,630 420,622 450,640 490,650 485,690 490,710 450,730 475,745",
    "580,640 585,700 600,730 640,735", "700,672 675,680 680,710 670,750", "195,580 160,580 130,592", "175,505 195,530 190,580", "120,630 170,640 205,645 210,615",
    "205,645 240,660 245,685 215,715 200,690 195,655", "245,685 285,725", "100,662 55,690 20,720 5,740", "100,662 150,675 200,700", "120,750 150,712 215,712",
    "310,718 355,745", "215,710 210,745", "360,630 355,665", "850,745 880,735 960,735 1050,720",
  ],
  B: [
    "90,32 150,25 215,5", "215,5 245,40 245,72", "270,0 265,72", "290,0 340,35 395,72 420,118", "395,72 440,65 470,45 460,15 475,0", "380,0 400,15 460,15",
    "470,50 520,45 575,80 610,110 640,150 665,155 655,195 640,210 600,205 560,200 550,170 560,140 600,130 635,150", "575,80 590,30 600,10",
    "600,10 640,20 675,40 690,55 740,75 760,95 755,115 700,130 640,145", "675,40 670,0", "760,0 800,22 870,25 885,10 905,45 870,70 830,85 760,92",
    "800,85 825,130 820,160 800,190 760,220 750,240 715,245 675,235", "800,190 825,218", "905,45 970,10 1050,5", "1050,5 1055,70 1000,90 960,100 948,105 970,150 1010,165 1074,182",
    "1074,182 1050,260 1030,275 960,250 910,220 890,265 850,255 825,218 780,240 750,260 740,300", "0,140 95,122 145,125 155,155",
    "675,262 740,300 800,320 835,370 860,420 890,510 930,520", "740,300 725,350 720,390 690,430 650,460 600,450 550,445 475,452",
    "555,310 555,350 600,380 690,430", "690,430 735,425 770,440 800,490 760,510 770,540 800,545 820,525", "650,460 600,550 570,555",
    "735,430 705,460 700,510 660,530 600,550", "490,562 540,555 600,555 630,580 680,595 750,598 850,595 930,595 980,598 950,555 930,520",
    "800,545 830,590", "800,490 820,525 870,530 900,555 935,530", "835,370 870,370 925,405 970,470 950,490 930,515",
    "925,405 935,390 1010,355 1015,385 1040,400 1040,430", "1080,310 1030,320 1020,345 1010,360", "970,475 1000,475 1020,440 1040,430 1060,480 1080,500",
    "950,490 1000,515 1040,510 1080,505", "1010,530 1015,600 1080,615", "1010,535 1080,530", "600,570 605,600 560,640 555,690 560,720",
    "555,665 520,645 480,640 435,665 435,690 380,675", "435,690 480,690 500,720", "680,598 680,720", "930,595 930,625 980,655 1020,625 1060,615",
    "930,625 925,670 850,690 800,680 750,700 690,705", "985,660 1000,680 1030,700", "1040,655 1070,650 1075,675 1045,680 1040,655",
  ],
  C: [
    "415,0 405,40 385,65 385,100 410,130 425,185", "298,122 280,150 280,180", "470,0 500,30 515,70 585,70 600,40 645,35",
    "515,75 500,90 495,130 485,140 495,180 450,190", "565,0 570,35 590,45", "645,35 655,75 675,110 660,150 630,180 625,220 605,205 560,200 495,180",
    "675,120 750,135 765,175 785,215 830,245 870,240 905,215", "645,35 690,30 680,0", "690,15 755,15", "755,0 755,60 765,100 720,115 675,120",
    "820,0 865,30 865,60 845,80 890,95 865,140 860,185 850,205 880,225", "870,25 900,25 960,50 1000,30 1050,40 1040,75 1010,110 1010,150 970,140 905,135",
    "905,135 910,165 895,200 905,270 930,295 980,300 1035,260 1040,205 1000,195 970,170 975,135", "980,300 1050,315 1080,310", "1050,315 1020,350 1040,375",
    "830,245 830,300 890,340 900,375 930,420", "830,290 780,315 740,345 690,360 640,375", "660,370 685,380 690,440 715,455",
    "785,225 700,235 665,260 650,310 640,375 600,380 570,360 530,335 480,350 455,325 470,300 468,240 440,235 440,200 460,200",
    "630,220 640,250 630,270 650,295", "380,190 375,215 350,240 290,250 265,270 295,285 285,335 320,365 370,355 350,410 320,440 315,460",
    "980,420 980,385 1010,370 1080,385", "1040,205 1080,200", "1010,130 1050,110 1080,105", "1050,55 1080,60", "720,0 740,20 755,20", "860,10 930,5 1000,0",
  ],
  D: [
    "250,95 290,105 345,105 320,140 312,175 340,195 345,225 370,260 368,305 385,335 430,350 465,365 510,375 550,405 590,415 590,395 640,390 720,380 800,375 815,330 830,280 855,260 865,220 910,195 945,180 925,155 930,135 965,120 1010,128 1040,145 1080,145",
    "580,415 560,460 488,485 490,495 510,510 515,570 500,600 515,630 560,670 620,725", "0,565 80,590 120,640 165,645 185,680 175,705 185,730 155,725 155,750",
  ],
  E: [
    "620,0 625,60 655,75 700,135 690,180 620,190 605,220 570,232 530,200 510,140 450,160 420,180 395,205 390,185 415,155 412,122 340,150 310,155 280,110 255,85 230,62 185,88 135,100 115,90 60,60 0,20",
    "155,0 150,30 120,50 125,90", "420,180 435,200 445,250 495,300 515,330 500,380 535,430 505,455 515,495 550,515 580,550 575,568 550,565 530,542 440,540 395,520 320,480 285,470 265,440 255,405 240,400",
    "495,300 435,310 430,340 365,348 325,385 270,385 245,400 220,410 215,440 225,460 200,490 145,500 120,410 90,370 60,365 25,310 50,265 55,215 0,185",
    "55,215 120,225 140,265 190,270 240,300 255,350 270,385", "145,500 80,530 45,520 0,480", "0,310 25,310",
    "45,520 45,565 110,610 150,592 165,630 230,655 250,620 260,590 285,555 395,520", "110,610 50,660 85,680 85,720", "230,655 250,720",
    "265,600 310,605 330,665 315,700 360,690 400,720", "550,515 600,472 640,510 660,560 690,575 740,605 800,595 840,625 875,650 910,660 910,700 935,720",
    "690,575 660,600 645,650 655,668 600,650 545,628 540,660 470,680 455,720", "655,668 670,690 645,720", "585,650 555,680 545,720", "875,655 840,675 855,720", "0,625 50,660", "0,640 20,690 10,720",
  ],
  F: [
    "250,0 260,35 200,65 150,55 90,40 75,0", "90,40 85,85 65,120 70,170 95,190", "75,25 20,40 10,70", "0,0 20,20 15,70",
    "200,65 180,120 95,190 75,240 80,265 70,310 80,365 90,440 100,480", "200,65 295,112 360,180 400,230 310,285", "295,112 250,155 238,205 255,260",
    "80,260 170,265 220,285 300,255 310,285 320,340 340,375 345,425 335,470", "172,270 165,320 120,365 80,370", "120,370 165,385 210,375 260,385 340,375",
    "165,385 160,465", "360,180 395,140 375,90 345,75 370,60 300,40 315,0",
    "395,140 470,155 475,125 550,105 600,115 640,185 705,182 800,165 790,130 800,95 850,92 875,110 870,160 890,200 855,210 850,240 800,245 770,245 765,215 715,205 710,182",
    "545,0 535,60 550,105", "675,0 625,60 605,110", "640,185 605,205 610,250 590,285 560,325 520,360", "400,230 445,245 470,285 555,325",
    "590,285 640,300 665,280 710,300 740,295 805,325 870,300 840,260 800,245", "870,300 915,320 955,280 955,235 1000,215 1010,185 1040,180 1080,145",
    "805,325 815,350 800,355 820,380 825,410 850,425 870,490", "915,320 930,360 920,400 885,430 870,490", "520,360 550,350 650,375 695,425 770,430 820,440 850,425",
    "520,370 510,380 455,430", "520,370 550,385 555,410 600,405", "850,0 850,85", "905,0 910,20 980,45 1040,65 1080,90", "1080,260 1055,270 1055,300 1080,310",
    "1080,340 1050,360 995,415 980,460 1000,535", "0,205 70,182", "0,310 70,320", "0,385 80,395", "0,105 60,140", "315,0 340,10 400,15 430,40 445,5",
  ],
};

const roads = {
  A: ["0,230 60,160 95,130 110,105 190,92 250,98 320,125 345,130 320,195 290,240 210,265 180,290 190,320 115,370 85,420 95,440 70,490 0,530", "370,128 430,125 470,100 475,20 500,0", "475,40 560,55 600,75 660,80 700,115 720,135", "0,240 40,320 110,375", "0,600 60,600 95,640"],
  B: ["0,205 60,215 170,205 250,160 270,105", "120,0 0,80", "270,110 325,170 345,250 390,430", "330,205 450,190", "0,310 80,340", "0,385 60,360 170,210 330,205", "60,480 160,440 290,430 305,400 380,410", "35,400 60,480", "200,630 290,550 380,470", "0,705 160,645 215,685 430,590 390,490", "75,340 120,350 230,385", "160,645 280,570", "370,460 390,440 430,470 430,560", "180,165 235,150"],
  C: ["0,120 50,90 140,75 190,30", "0,585 40,590 75,545 70,500", "265,450 270,540 150,630 140,690 25,740", "140,690 300,685 560,700 580,610 680,535 740,450", "560,700 540,740", "560,705 640,690 750,640 830,700", "680,540 740,610 790,595 910,555 880,450", "790,590 800,545 845,520 890,490", "910,550 1030,545 1000,440", "1030,545 1020,650 1080,650", "910,555 880,690", "1040,560 1074,510", "880,735 1010,660", "1030,430 1020,560"],
  F: ["0,560 100,530 260,515 370,485 460,485", "250,515 265,620 330,740", "95,540 150,590 200,620", "560,500 640,470 670,460", "330,740 370,655 420,655 430,635 540,580 590,500", "690,620 620,695 540,725", "710,600 720,630 800,640 880,580 900,560", "720,640 760,740", "795,540 800,640 825,740 875,690 870,580 890,575 920,640", "875,695 960,650 1075,640", "875,695 960,690 1060,730", "0,640 60,660 150,670", "100,540 60,580 0,650", "200,700 240,720 330,740"],
};
const trunk = {
  A: ["0,525 60,500 90,470 105,440 80,410"],
  B: ["0,200 40,225 60,310 80,340 200,350 380,410 395,400 415,200", "0,595 120,545 240,480 360,450", "120,350 110,410 60,450 0,490", "395,410 430,430 420,470 370,490"],
  F: ["215,480 180,520 185,560 195,620 190,680 215,740", "0,620 60,600 110,640 100,670 20,660", "20,560 90,540 150,590 190,600", "70,505 85,560 60,600"],
  C: ["1080,510 1065,550 1075,600"],
};
const bounds = {
  A: ["65,0 75,40 130,70 190,90 250,98 225,140 235,175 290,185 345,203", "885,10 960,10 1010,0 1020,30 1060,60"],
  C: ["705,460 725,540 790,595 850,640 860,680 835,740", "890,740 895,700 940,665 990,700 1020,690 1060,660"],
  F: ["0,540 30,560 30,600 0,620", "175,480 190,500 180,560", "170,640 180,690 185,740"],
};
const river = {
  B: ["20,385 90,310 160,260 300,215 350,175 430,130 480,140"],
  F: ["870,490 940,540 1000,610 1075,670"],
};
const stream = {
  A: ["820,175 860,185 925,188 970,190 1060,180", "700,50 740,90 775,130"],
  B: ["400,410 440,400", "0,670 100,600 200,540 360,470", "500,240 560,200"],
  F: ["345,470 350,500 385,560 400,640 480,710 540,720", "650,640 710,680 715,730"],
};
const snow = {
  A: ["410,190 430,160 450,165 470,140 490,145 520,132 505,160 480,165 470,185 450,180 440,205", "650,35 680,42 700,38 690,48 660,48", "690,50 720,70 760,110 775,130 755,118 720,85", "725,15 760,20 790,35 830,60 860,45 900,30 870,15 850,5 800,20 770,5", "750,60 800,70 850,95 830,100 790,85", "880,40 900,70 880,85 930,85 900,110 940,105 980,130 1000,120 1010,150 1040,190 1060,175 1074,185 1074,140 1045,110 1050,60 1020,45 1000,10 980,35 950,10 930,30 900,20 920,50", "225,280 250,275 240,290 225,292", "130,270 175,265 160,290 140,300"],
  D: ["0,5 40,0 20,20 0,25", "60,15 95,20 80,45 110,55", "130,50 150,60 180,100 190,60 180,35 190,20 165,10 150,30 130,10 140,30", "20,30 60,55 50,60 20,50 0,45", "60,40 90,65 130,75 160,100 110,88 70,75", "0,135 30,145 38,185 0,185", "0,208 18,205 10,215", "205,45 215,55 205,55"],
};
const woods = {
  A: ["10,115 60,108 95,120 85,150 110,165 70,180 65,140 30,135", "0,190 25,180 20,200 0,215", "25,250 80,255 130,275 100,300 60,290 20,285 60,270", "110,330 170,305 215,290 210,345 155,352 150,390 115,385", "150,400 175,450 165,510 125,530 140,480 100,510 150,440", "490,100 520,100 525,130 505,115", "10,535 80,525 60,545 20,560"],
  B: ["295,575 320,562 322,585 300,585", "160,680 175,675 170,695 155,700", "75,195 95,210 80,212"],
  C: ["760,730 770,700 815,685 830,700 800,740", "860,610 875,595 870,640", "940,670 970,660 950,690"],
  F: ["825,515 860,500 900,530 890,560 930,600 990,610 985,650 930,640 900,575 850,580 855,620 830,620", "910,680 950,665 945,700 915,705", "1000,545 1075,580 1075,620 1030,600", "15,680 30,660 25,700 10,740", "660,475 670,485 662,485"],
};

const places = [
  ["گلگت بلتستان", "A", 535, 30, 11, "#8d6d9d"], ["سکردو", "A", 740, 152, 10], ["ایبٹ آباد", "A", 95, 458, 10], ["آباد", "A", 132, 397, 9], ["ہری پور", "A", 25, 502, 9], ["اسلام آباد", "A", 60, 570, 11],
  ["چکوال", "B", 12, 107, 9], ["جہلم", "B", 235, 105, 9], ["گجرات", "B", 327, 165, 10], ["منڈی بہاؤالدین", "B", 170, 199, 10], ["پسرور", "B", 487, 244, 9], ["سیالکوٹ", "B", 530, 200, 10], ["گوجرانوالہ", "B", 360, 272, 10], ["شکرگڑھ", "B", 615, 290, 9], ["حافظ آباد", "B", 222, 335, 9], ["کامونکی", "B", 425, 338, 9], ["نارووال", "B", 520, 330, 10], ["شیخوپورہ", "B", 303, 390, 10], ["چنیوٹ", "B", 35, 428, 9], ["لاہور", "B", 393, 474, 10], ["فیصل آباد", "B", 65, 520, 11], ["رائے ونڈ", "B", 365, 520, 9], ["سمندری", "B", 90, 585, 9], ["قصور", "B", 420, 590, 9], ["اوکاڑہ", "B", 158, 636, 9], ["ساہیوال", "B", 68, 716, 9], ["دیپالپور", "B", 213, 714, 9],
  ["عارف والا", "C", 15, 103, 9], ["پاکپتن", "C", 145, 112, 9], ["بہاولنگر", "C", 107, 165, 9], ["ہارون آباد", "C", 72, 268, 9],
  ["Bikaner", "C", 124, 693, 11], ["Churu", "C", 570, 661, 10], ["Jhunjhunu", "C", 684, 711, 10], ["Narnaul", "C", 876, 689, 10], ["Rewari", "C", 1013, 692, 11], ["Bhiwani", "C", 817, 506, 10], ["Rohtak", "C", 1003, 496, 10],
  ["New Delhi", "F", 98, 526, 11], ["Gurugram", "F", 46, 621, 11], ["Bulandshahr", "F", 270, 590, 10], ["Palwal", "F", 130, 663, 10], ["Khurja", "F", 271, 678, 10], ["Amroha", "F", 430, 458, 10], ["Moradabad", "F", 518, 522, 11], ["Sambhal", "F", 465, 583, 10], ["Bareilly", "F", 693, 602, 11], ["Budaun", "F", 612, 690, 10], ["Kasganj", "F", 485, 749, 10], ["Pilibhit", "F", 797, 530, 10], ["Dhangadhi", "F", 990, 550, 10], ["Lakhimpur", "F", 1040, 752, 9],
];

const towns = [["A", 740, 155], ["A", 96, 468], ["A", 57, 588], ["B", 170, 168], ["B", 325, 175], ["B", 454, 193], ["B", 486, 256], ["B", 618, 255], ["B", 358, 284], ["B", 223, 303], ["B", 368, 330], ["B", 542, 297], ["B", 303, 402], ["B", 392, 440], ["B", 63, 482], ["B", 33, 401], ["B", 28, 577], ["B", 427, 562], ["B", 365, 527], ["B", 160, 646], ["B", 68, 681], ["B", 213, 684], ["C", 142, 80], ["C", 54, 93], ["C", 121, 707], ["C", 569, 632], ["C", 684, 676], ["C", 873, 699], ["C", 1013, 658], ["C", 883, 497], ["C", 1000, 467], ["F", 98, 546], ["F", 46, 585], ["F", 268, 603], ["F", 268, 642], ["F", 127, 674], ["F", 438, 468], ["F", 464, 553], ["F", 692, 616], ["F", 612, 702], ["F", 797, 540], ["F", 1058, 726]];

const enclaves = [["C", 273, 75, 15], ["D", 90, 84, 14], ["D", 150, 102, 11], ["D", 0, 138, 14], ["D", 38, 225, 14], ["B", 238, 80, 14], ["B", 584, 304, 14], ["B", 452, 435, 14], ["F", 148, 500, 11]];

const paths = (group, amount) =>
  Object.entries(group).flatMap(([t, list]) => list.map((s) => toPath(rough(at(t, s), amount)))).join("");

const areas = (group, amount) =>
  Object.entries(group).flatMap(([t, list]) => list.map((s) => toPath(rough(at(t, s), amount)) + "Z")).join("");

const land = "M" + [
  toPath(rough(coast)).slice(1), "-20 640", "-20 743",
  toPath(rough(west1)).slice(1), "-20 857", "-20 912",
  toPath(rough(west2)).slice(1), toPath(desert).slice(1), "-20 1855", "-20 1925",
  toPath(rough(south, 0.3)).slice(1), "2200 1990", "2200 -20", "1349 -20",
].join("L") + "Z";

function MapCanvas() {
  return (
    <main className="min-w-0 flex-1 overflow-hidden border-b border-l border-[#b0b0b0] bg-[#beb297]">
      <svg viewBox="3 3 2148 2148" preserveAspectRatio="xMidYMid slice" className="size-full" role="img" aria-label="Map canvas">
        <rect width="2160" height="2160" fill="#f2efe9" />
        <path d={areas(woods, 0.5)} fill="#c0dcb2" />
        <path d={areas(snow, 0.8)} fill="#c3e0f7" fillRule="evenodd" stroke="#b4d7f5" strokeWidth="2" />
        <path d={paths(river, 0.3)} fill="none" stroke="#aad3df" strokeWidth="6" />
        <path d={paths(stream, 0.3)} fill="none" stroke="#cbe2e8" strokeWidth="3" />
        <path d={paths(bounds, 0.2)} fill="none" stroke="#cdbfd2" strokeWidth="5" />
        <path d={paths(roads, 0.1)} fill="none" stroke="#f9b9ac" strokeWidth="3.500" />
        <path d={paths(trunk, 0.06)} fill="none" stroke="#e98fa9" strokeWidth="4" />
        <g fill="#f8f6f2" stroke="#777" strokeWidth="3">
          {towns.map(([t, x, y], i) => <circle key={i} cx={x + ORIGIN[t][0]} cy={y + ORIGIN[t][1]} r="6" />)}
        </g>
        <g textAnchor="middle" fontFamily="Noto Sans, DejaVu Sans, sans-serif" stroke="#f2efe9" strokeWidth="6" style={{ paintOrder: "stroke" }}>
          {places.map(([n, t, x, y, s, c]) => (
            <text key={n + t} x={x + ORIGIN[t][0]} y={y + ORIGIN[t][1]} fontSize={s * 3} fill={c || "#4a4a4a"}>{n}</text>
          ))}
        </g>
        <g fill="#beb297" stroke="#232323" strokeWidth="4">
          {enclaves.map(([t, x, y, r], i) => <circle key={i} cx={x + ORIGIN[t][0]} cy={y + ORIGIN[t][1]} r={r} />)}
        </g>
        <path d={land} fill="#beb297" stroke="#232323" strokeWidth="5.500" strokeLinejoin="round" />
        <path d={paths(inner, 0.24) + toPath(at("C", "280,180 450,188"))} fill="none" stroke="#232323" strokeWidth="5" strokeLinejoin="round" />
      </svg>
    </main>
  );
}

const Splitter = () => (
  <div className="flex w-[9px] shrink-0 items-center justify-center">
    <span className="h-4 w-1 border-x border-dotted border-[#bdbdbd]" />
  </div>
);

/* ---------- processing toolbox ---------- */

const toolIcons = {
  overlapHot: <Overlap hot />,
  overlap: <Overlap />,
  gear: <Gear />,
  select: <Svg><rect x="1.500" y="1.500" width="14" height="13" fill="#fbe34a" stroke="#b59d1a" /><Pin x={16} y={12} /></Svg>,
  count: <Svg><path d="M1 7c0-6 6-5 10-4s12-2 12 4-5 4-8 4-3-1-6-1-8 2-8-3z" fill="#7fb27d" stroke="#446" /><circle cx="6" cy="6" r="3" fill="#8fbf8d" stroke="#444" /><circle cx="17" cy="7.500" r="2.500" fill="#8fbf8d" stroke="#444" /><circle cx="9" cy="18" r="3" fill="#fff" stroke="#777" /><path d="M23 14h-6l4 4.500-4 4.500h6" stroke="#4f6f8f" strokeWidth="2" /></Svg>,
  sumLine: <Svg><path d="M1 10c0-6 6-5 10-4s12-2 12 4-5 4-8 4-3-1-6-1-8 2-8-3z" fill="#7fb27d" stroke="#446" /><path d="M1 21L22 2M4 5l15 12" stroke="#666" strokeWidth="3" /><path d="M1 21L22 2M4 5l15 12" stroke="#aaa" /><path d="M23 15h-6l4 4-4 4h6" stroke="#4f6f8f" strokeWidth="2" /></Svg>,
  sigma: <Svg><path d="M19 6V2.500H5l8 9.500-8 9.500h14V18" stroke="#5d7f95" strokeWidth="2.300" /></Svg>,
  cross: <Svg><path d="M1 14l7 3 14-15M2 23l6-6 6 5M11 2l6 5 6 5" stroke="#666" strokeWidth="2.400" /><circle cx="8" cy="17" r="3" fill="#6fa66f" stroke="#345" /><circle cx="17" cy="7" r="3" fill="#6fa66f" stroke="#345" /></Svg>,
};

const tree = [
  ["group", "Recently used", "clock"], ["item", "Intersection", "overlapHot", true],
  ["group", "Vector analysis", "q"], ["item", "Count points in polygon", "count"], ["item", "Overlap analysis", "overlap"], ["item", "Sum line lengths", "sumLine"],
  ["group", "Vector general", "q"], ["item", "Join attributes by location", "gear"], ["item", "Join attributes by location (summary)", "sigma"],
  ["group", "Vector overlay", "q"], ["item", "Clip", "overlap"], ["item", "Extract/clip by extent", "gear"], ["item", "Intersection", "overlap"], ["item", "Line intersections", "cross"],
  ["group", "Vector selection", "q"], ["item", "Extract by location", "gear"], ["item", "Select by location", "select"],
  ["group", "SAGA", "saga"], ["sub", "Features - Lines"], ["leaf", "Line-Polygon Intersection"], ["sub", "Features - Polygons"], ["leaf", "Intersect"], ["leaf", "Polygon Self-Intersection"], ["leaf", "Polygon-Line Intersection"],
];

function TreeRow({ kind, name, icon, active }) {
  const grey = kind === "sub" || kind === "leaf" || icon === "saga";
  const pad = { group: "", item: "pl-[60px]", sub: "pl-[30px]", leaf: "pl-[90px]" }[kind];
  return (
    <li className={"relative flex shrink-0 items-center " + pad + (kind === "sub" || name.startsWith("Line-") ? " h-[26px]" : " h-[27px]") + (active ? " bg-[#efefef]" : "")}>
      {(kind === "group" || kind === "sub") && (
        <button aria-label={"Collapse " + name} className="grid w-[30px] place-items-center"><Down /></button>
      )}
      {kind !== "sub" && (
        <span className="grid w-[30px] place-items-center">
          {icon === "clock" ? <Clock /> : icon === "q" ? <QLogo s={22} /> : icon === "saga" || kind === "leaf" ? <Saga /> : toolIcons[icon]}
        </span>
      )}
      <span className={"pt-0.5 pl-[3px] text-[17px] leading-6 whitespace-nowrap " + (grey ? "text-[#a0a0a0]" : "text-[#1a1a1a]")}>{name}</span>
      {active && <span className="pointer-events-none absolute -top-[7px] left-[55px] z-10 h-10 w-[143px] border-5 border-[#e81c24]" />}
    </li>
  );
}

function ProcessingPanel() {
  return (
    <aside className="flex w-[451px] shrink-0 flex-col">
      <div className="relative flex h-6 shrink-0 items-center justify-between pr-[2px] pl-1">
        <h2 className="relative z-20 text-[17px]">Processing Toolbox</h2>
        <DockButtons name="processing toolbox" />
        <span className="pointer-events-none absolute -top-1.5 -left-3 z-10 h-[38px] w-[187px] border-5 border-[#e81c24] bg-[#f0f0f0]" />
      </div>
      <div className="mb-1 flex h-7 shrink-0 items-center pl-1.5">
        <button aria-label="Models" className="grid w-[25px] place-items-center"><Svg s={18}><path d="M8 1v15M1 8h15M3 3l10 11M13 3L3 14" stroke="#d22" strokeWidth="2.500" /><circle cx="8" cy="8" r="4.500" fill="#d22" /><circle cx="8" cy="8" r="1.500" fill="#fff" /><circle cx="12" cy="18" r="4" fill="#8aaede" /><circle cx="19" cy="14" r="4" fill="#777" /><path d="M11 12h13l-6.500 7z" fill="#444" /></Svg></button>
        <button aria-label="Scripts" className="grid w-[25px] place-items-center"><Svg s={18}><path d="M2 12c0-5 2-5 6-5V3c0-3 9-3 9 0v6c0 3-8 1-9 5H4c-2 0-2-1-2-2z" fill="#3c72a8" /><path d="M22 13c0 5-2 5-6 5v3c0 3-8 3-8 0v-5c0-3 8-1 9-5h3c2 0 2 1 2 2z" fill="#f6cf3d" /><path d="M11 12h13l-6.500 7z" fill="#444" /></Svg></button>
        <button aria-label="History" className="grid w-[25px] place-items-center"><Clock s={17} /></button>
        <button aria-label="Results viewer" className="grid w-[25px] place-items-center"><Svg s={18}><path d="M4 1h12l4 4v18H4z" fill="#f4f4f4" stroke="#aaa" strokeWidth="1.500" /><path d="M7 9h10M7 13h10M7 17h7" stroke="#aaa" strokeWidth="2" /></Svg></button>
        <span className="mx-1 h-5 w-px bg-[#cfcfcf]" />
        <button aria-label="Edit in place" className="grid w-[26px] place-items-center"><Svg s={18}><path d="M1 2h17v14H9l-4 5v-5H1z" fill="#f9e24a" stroke="#c8ae22" /><path d="M21 5l3 1-9 14-4 3 1-5z" fill="#e6cf52" stroke="#8b7d24" /></Svg></button>
        <span className="mx-1 h-5 w-px bg-[#cfcfcf]" />
        <button aria-label="Options" className="grid w-[26px] place-items-center"><Svg s={18}><path d="M3 3a5 5 0 1 0 8 6" stroke="#888" strokeWidth="2.500" /><path d="M12 10l10 11" stroke="#8f7b2a" strokeWidth="5" /><path d="M12.500 10.500l9 10" stroke="#f0d477" strokeWidth="3" /></Svg></button>
      </div>
      <div className="flex h-[30px] shrink-0 items-center rounded-xs border border-[#4c9bd8] bg-white pr-2.5 pl-2.5">
        <Svg s={19}><circle cx="9.500" cy="9.500" r="7.500" stroke="#7a7a7a" strokeWidth="1.800" /><path d="M15 15l8 8" stroke="#7a7a7a" strokeWidth="2" /></Svg>
        <input aria-label="Search tools" defaultValue="interse" className="ml-[9px] min-w-0 flex-1 bg-transparent pt-0.5 text-[15px] outline-none" />
        <button aria-label="Clear search">
          <svg viewBox="0 0 20 14" width="20" height="14" aria-hidden="true"><path d="M5 0h15v14H5L0 7z" fill="#8b8b8b" /><path d="M8.500 3.500l7 7M15.500 3.500l-7 7" stroke="#fff" strokeWidth="2" /></svg>
        </button>
      </div>
      <div className="flex min-h-0 flex-1 border border-[#b4b4b4] bg-white">
        <ul className="flex min-w-0 flex-1 flex-col overflow-hidden">
          {tree.map(([kind, name, icon, active], i) => <TreeRow key={i} kind={kind} name={name} icon={icon} active={active} />)}
        </ul>
        <div className="flex w-[21px] shrink-0 flex-col border-l border-[#c0c0c0] bg-[#dedede]">
          <button aria-label="Scroll up" className="grid h-5 rotate-180 place-items-center bg-[#f8f8f8]"><Down w={11} /></button>
          <div className="flex-1 border-y border-[#c0c0c0] bg-linear-to-r from-[#fdfdfd] to-[#f2f2f2]" />
          <div className="h-[67px]" />
          <button aria-label="Scroll down" className="grid h-[21px] place-items-center border-t border-[#c0c0c0] bg-[#f8f8f8]"><Down w={11} /></button>
        </div>
      </div>
    </aside>
  );
}

/* ---------- status bar ---------- */

const Spin = ({ id, value, width }) => (
  <span className={"flex h-[30px] rounded-xs border border-[#b0b0b0] bg-white " + width}>
    <input id={id} defaultValue={value} className="min-w-0 flex-1 bg-transparent pl-1 text-[16px] outline-none" />
    <span className="flex w-5 flex-col justify-center gap-1.5 border-l border-[#c4c4c4] bg-[#f8f8f8]">
      <button aria-label={id + " up"} className="grid rotate-180 place-items-center"><Down w={11} /></button>
      <button aria-label={id + " down"} className="grid place-items-center"><Down w={11} /></button>
    </span>
  </span>
);

function StatusBar() {
  return (
    <footer className="flex h-9 shrink-0 items-center pr-[33px] pl-1 text-[15px] whitespace-nowrap">
      <div className="flex h-[30px] w-[291px] items-center rounded-xs border border-[#b0b0b0] bg-white pl-2.5">
        <Svg s={19}><circle cx="9.500" cy="9.500" r="7.500" stroke="#7a7a7a" strokeWidth="1.800" /><path d="M15 15l8 8" stroke="#7a7a7a" strokeWidth="2" /></Svg>
        <input aria-label="Type to locate" placeholder="Type to locate (Ctrl+K)" className="ml-[9px] min-w-0 flex-1 bg-transparent text-[16px] outline-none placeholder:text-[#808080]" />
      </div>
      <div className="ml-auto flex items-center">
        <label htmlFor="coordinate">Coordinate</label>
        <input id="coordinate" defaultValue="79.88,34.72" className="ml-[3px] h-[30px] w-[101px] rounded-xs border border-[#b0b0b0] bg-white pl-[5px] text-[16px]" />
        <button aria-label="Toggle extents display" className="ml-1.5">
          <Svg><path d="M1 5l4 3M7 0l1 5M2 13l4-2M12 1l-2 5" stroke="#222" strokeWidth="1.500" /><ellipse cx="14" cy="13" rx="6" ry="9" transform="rotate(-30 14 13)" fill="#fff" stroke="#222" strokeWidth="2.200" /><path d="M7 13l10-6M9 17l9-6M11 5l4 6" stroke="#222" strokeWidth="2" /><circle cx="17" cy="16" r="1.500" fill="#222" /></Svg>
        </button>
        <label htmlFor="scale" className="ml-3">Scale</label>
        <span className="relative ml-[3px] flex">
          <select id="scale" className="h-[26px] w-[113px] appearance-none rounded-xs border border-[#b0b0b0] bg-white pl-[3px] text-[16px]">
            <option>1:4523726</option>
          </select>
          <span className="pointer-events-none absolute top-[9px] right-[10px]"><Down w={11} /></span>
        </span>
        <button aria-label="Lock scale" className="ml-3">
          <Svg s={22}><path d="M6 12V7c0-7 12-7 12 0v5" stroke="#888" strokeWidth="2.500" /><rect x="2.500" y="11" width="19" height="12.500" rx="2" fill="#666" /></Svg>
        </button>
        <label htmlFor="magnifier" className="ml-2">Magnifier</label>
        <span className="ml-[3px]"><Spin id="magnifier" value="100%" width="w-[109px]" /></span>
        <label htmlFor="rotation" className="ml-[9px]">Rotation</label>
        <span className="ml-[9px]"><Spin id="rotation" value="0.0 °" width="w-[101px]" /></span>
        <label className="ml-1.5 flex items-center gap-1.5"><Check label="Render" checked />Render</label>
        <button className="ml-4 flex items-center gap-px text-[16px]"><Globe /> EPSG:4326</button>
        <button aria-label="Messages" className="ml-6">
          <Svg s={26}><ellipse cx="12" cy="11" rx="11.500" ry="8.500" fill="#555" /><path d="M13 17l7 6-1-8z" fill="#555" /><g fill="#eee"><circle cx="7" cy="11" r="1.600" /><circle cx="12" cy="11" r="1.600" /><circle cx="17" cy="11" r="1.600" /></g></Svg>
        </button>
      </div>
    </footer>
  );
}

/* ---------- window ---------- */

export default function App() {
  return (
    <div className="flex h-screen flex-col border border-[#666] bg-[#f0f0f0] font-['Open_Sans','Noto_Sans','DejaVu_Sans',sans-serif] text-[#111]">
      <header className="flex h-11 shrink-0 items-center bg-white pl-[11px]">
        <QLogo s={24} />
        <h1 className="ml-[5px] pt-px text-[17px]">*Sne Navigation Bootcamp — QGIS</h1>
        <div className="ml-auto flex h-full">
          <button aria-label="Minimize" className="grid w-[70px] place-items-center"><Svg s={16}><path d="M0 12h24" stroke="#111" strokeWidth="1.500" /></Svg></button>
          <button aria-label="Maximize" className="grid w-[70px] place-items-center"><Svg s={16}><rect x="1" y="1" width="22" height="22" stroke="#111" strokeWidth="1.500" /></Svg></button>
          <button aria-label="Close" className="grid w-[70px] place-items-center"><Svg s={16}><path d="M1 1l22 22M23 1L1 23" stroke="#111" strokeWidth="1.500" /></Svg></button>
        </div>
      </header>
      <nav className="flex h-[30px] shrink-0 items-center gap-4 border-b border-[#d4d4d4] pt-0.5 pl-[13px] text-[17px]">
        {menus.map(([m, k]) => (
          <button key={m}>{m.slice(0, k)}<span className="underline underline-offset-2">{m[k]}</span>{m.slice(k + 1)}</button>
        ))}
      </nav>
      <Toolbar groups={toolbar1} label="Project and navigation" />
      <Toolbar groups={toolbar2} label="Selection and annotation" />
      <div className="flex min-h-0 flex-1">
        <LayersPanel />
        <Splitter />
        <MapCanvas />
        <Splitter />
        <ProcessingPanel />
      </div>
      <StatusBar />
    </div>
  );
}
